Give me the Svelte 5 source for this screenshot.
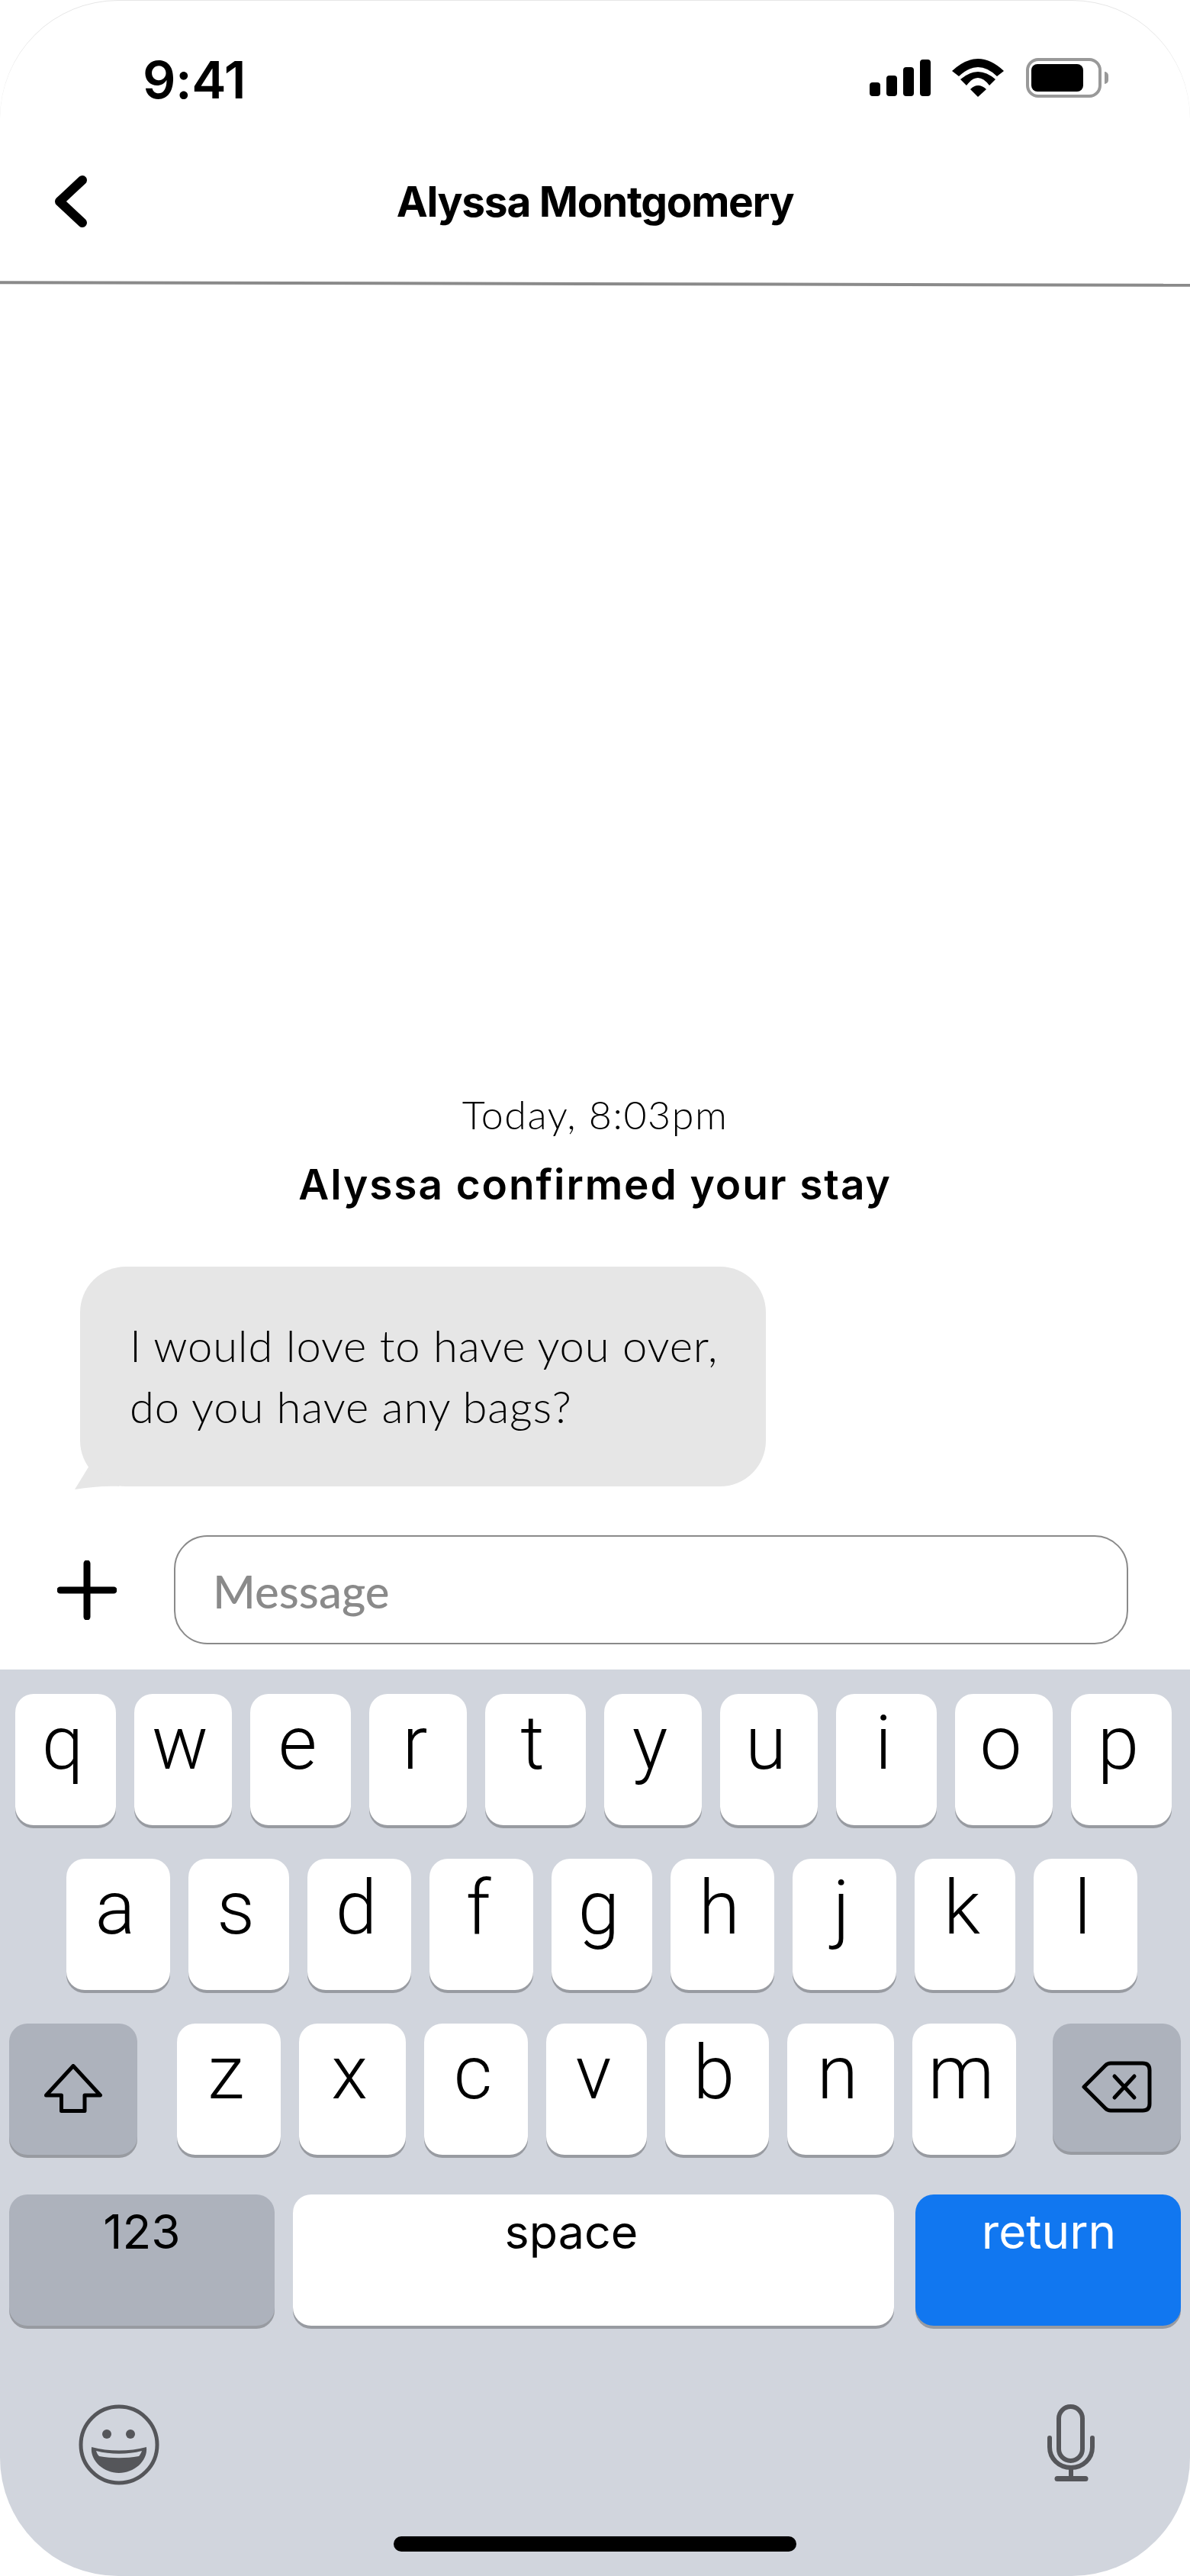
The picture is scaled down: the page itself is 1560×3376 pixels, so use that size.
<script>
  const rows = [
    [["q", 132], ["w", 128], ["e", 132], ["r", 128], ["t", 132], ["y", 128], ["u", 128], ["i", 132], ["o", 128], ["p", 132]],
    [["a", 136], ["s", 132], ["d", 136], ["f", 136], ["g", 132], ["h", 136], ["j", 136], ["k", 132], ["l", 136]]
  ];
  const lower = [["z", 136], ["x", 140], ["c", 136], ["v", 132], ["b", 136], ["n", 140], ["m", 136]];
</script>

<div class="phone">
  <header class="status">
    <span class="time">9:41</span>
    <div class="status-icons">
      <div class="signal">
        <i class="b1"></i><i class="b2"></i><i class="b3"></i><i class="b4"></i>
      </div>
      <svg class="wifi" width="68" height="50" viewBox="0 0 68 50">
        <path d="M0 16 Q34 -16 68 16 L59 23 Q34 -1 9 23 Z" />
        <path d="M11 27 Q34 7 57 27 L49 35 Q34 15 19 35 Z" />
        <path d="M24 40 Q34 30 45 40 L34 50 Z" />
      </svg>
      <div class="battery"><div class="charge"></div></div>
      <div class="nub"></div>
    </div>
  </header>

  <nav class="nav">
    <svg class="back" width="42" height="68" viewBox="0 0 42 68">
      <path d="M36 6 L6 34 M6 34 L36 62" />
    </svg>
    <h1>Alyssa Montgomery</h1>
    <span></span>
  </nav>
  <div class="divider"></div>

  <main class="chat">
    <p class="stamp">Today, 8:03pm</p>
    <p class="confirmed">Alyssa confirmed your stay</p>
    <div class="bubble">
      <svg class="tail" width="60" height="34" viewBox="0 0 60 34">
        <path d="M0 34 L19 3 L59 30 C40 29 20 31 0 34 Z" />
      </svg>
      I would love to have you over,<br />do you have any bags?
    </div>
  </main>

  <div class="composer">
    <svg class="plus" width="78" height="78" viewBox="0 0 78 78">
      <path d="M39 4 V74 M4 39 H74" />
    </svg>
    <div class="field"><span>Message</span></div>
  </div>

  <section class="keyboard">
    <div class="row first">
      {#each rows[0] as [ch, w]}
        <div class="key" style:width="{w}px">{ch}</div>
      {/each}
    </div>
    <div class="row second">
      {#each rows[1] as [ch, w]}
        <div class="key" style:width="{w}px">{ch}</div>
      {/each}
    </div>
    <div class="row third">
      <div class="key mod shift">
        <svg width="76" height="64" viewBox="0 0 76 64">
          <path d="M38 2.500 L73.500 41 H53 V61.500 H22.500 V41 H2.500 Z" />
        </svg>
      </div>
      <div class="letters">
        {#each lower as [ch, w]}
          <div class="key" style:width="{w}px">{ch}</div>
        {/each}
      </div>
      <div class="key mod del">
        <svg width="92" height="68" viewBox="0 0 92 68">
          <path d="M3 34 L31 6 Q34 3 38 3 H80 Q89 3 89 12 V56 Q89 65 80 65 H38 Q34 65 31 62 Z" />
          <path d="M43 20 L69 48 M69 20 L43 48" />
        </svg>
      </div>
    </div>
    <div class="row fourth">
      <div class="key wide mod">123</div>
      <div class="key wide space">space</div>
      <div class="key wide go">return</div>
    </div>
    <div class="tray">
      <svg class="emoji" width="106" height="106" viewBox="0 0 106 106">
        <circle class="ring" cx="53" cy="53" r="50" />
        <circle class="eye" cx="37" cy="39" r="6" />
        <circle class="eye" cx="68" cy="39" r="6" />
        <path class="mouth" d="M17 56 C40 62 66 62 89 56 C91 75 72 90 53 90 C34 90 15 75 17 56 Z" />
        <path class="teeth" d="M23 61 C42 66 64 66 83 61 C82 64 80 67 79 68 C62 71 44 71 27 68 C25 66 24 64 23 61 Z" />
      </svg>
      <svg class="mic" width="62" height="102" viewBox="0 0 62 102">
        <rect class="capsule" x="15" y="3" width="31" height="71" rx="15.500" />
        <path class="cup" d="M3 44 V56 C3 71 15 83 31 83 C47 83 59 71 59 56 V44" />
        <path class="cup" d="M31 83 V97" />
        <path class="base" d="M13 97.500 H50" />
      </svg>
    </div>
    <div class="home"></div>
  </section>
</div>

<style>
  :global(body) {
    margin: 0;
    background: #fff;
  }

  .phone {
    width: 1560px;
    height: 3376px;
    display: flex;
    flex-direction: column;
    overflow: hidden;
    border-radius: 155px;
    box-shadow: inset 0 1px 0 #e6e6e6;
    background: #fff;
    color: #000;
    font-family: "Inter", "Liberation Sans", sans-serif;
  }

  /* status bar */
  .status {
    height: 158px;
    flex: none;
    box-sizing: border-box;
    padding: 70px 107px 0 187px;
    display: flex;
    justify-content: space-between;
    align-items: flex-start;
  }

  .time {
    font-size: 68px;
    font-weight: 600;
    line-height: 68px;
    letter-spacing: -0.5px;
  }

  .status-icons {
    display: flex;
    align-items: flex-start;
    margin-top: 6px;
  }

  .signal {
    display: flex;
    align-items: flex-end;
    gap: 8px;
    height: 48px;
    margin-top: 2px;
    margin-right: 28px;
  }

  .signal i {
    display: block;
    width: 14px;
    border-radius: 4px;
    background: #000;
  }

  .signal .b1 { height: 18px; }
  .signal .b2 { height: 27px; }
  .signal .b3 { height: 38px; }
  .signal .b4 { height: 48px; }

  .wifi {
    margin-top: 1px;
    margin-right: 29px;
    fill: #000;
  }

  .battery {
    width: 99px;
    height: 52px;
    box-sizing: border-box;
    border: 4px solid #999;
    border-radius: 16px;
    padding: 4px 20px 4px 3px;
  }

  .charge {
    height: 36px;
    border-radius: 8px;
    background: #000;
  }

  .nub {
    width: 5px;
    height: 16px;
    margin: 18px 0 0 4px;
    border-radius: 0 8px 8px 0;
    background: #999;
  }

  /* nav */
  .nav {
    height: 212px;
    flex: none;
    box-sizing: border-box;
    padding-left: 72px;
    display: grid;
    grid-template-columns: 1fr auto 1fr;
    align-items: center;
  }

  .back {
    fill: none;
    stroke: #000;
    stroke-width: 12;
    stroke-linecap: round;
    stroke-linejoin: round;
  }

  h1 {
    margin: 0 0 0 -72px;
    font-size: 55px;
    font-weight: 700;
    line-height: 64px;
    letter-spacing: -1.300px;
  }

  .divider {
    height: 4px;
    flex: none;
    background: #8a8a8a;
    transform: rotate(0.136deg);
  }

  /* chat */
  .chat {
    flex: 1;
    min-height: 0;
    display: flex;
    flex-direction: column;
    align-items: center;
    justify-content: flex-end;
  }

  .stamp {
    margin: 0;
    font-family: "Lato", sans-serif;
    font-size: 52px;
    font-weight: 300;
    line-height: 60px;
    letter-spacing: 1.500px;
  }

  .confirmed {
    margin: 30px 0 76px;
    font-size: 55px;
    font-weight: 600;
    line-height: 64px;
    letter-spacing: 1.900px;
  }

  .bubble {
    position: relative;
    align-self: flex-start;
    margin-left: 105px;
    width: 899px;
    height: 288px;
    box-sizing: border-box;
    padding: 63px 0 0 65px;
    border-radius: 60px;
    background: #e6e6e6;
    font-family: "Lato", sans-serif;
    font-size: 58px;
    font-weight: 300;
    line-height: 80px;
    letter-spacing: 0.800px;
  }

  .tail {
    position: absolute;
    left: -7px;
    bottom: -4px;
    fill: #e6e6e6;
  }

  /* composer */
  .composer {
    flex: none;
    height: 240px;
    box-sizing: border-box;
    padding: 64px 81px 0 75px;
    display: flex;
    align-items: flex-start;
    gap: 75px;
  }

  .plus {
    margin-top: 33px;
    fill: none;
    stroke: #000;
    stroke-width: 9;
    stroke-linecap: round;
  }

  .field {
    flex: 1;
    height: 143px;
    box-sizing: border-box;
    border: 2px solid #8a8a8a;
    border-radius: 44px;
    padding: 3px 0 0 49px;
    display: flex;
    align-items: center;
    color: #8a8a8a;
    font-family: "Lato", sans-serif;
    font-size: 60px;
    font-weight: 500;
  }

  /* keyboard */
  .keyboard {
    flex: none;
    height: 1188px;
    box-sizing: border-box;
    padding-top: 32px;
    background: #d1d5dd;
    display: flex;
    flex-direction: column;
  }

  .row {
    display: flex;
    gap: 24px;
    height: 172px;
    margin-bottom: 44px;
  }

  .row.first { padding-left: 20px; }
  .row.second { padding-left: 87px; }

  .row.third {
    padding-left: 12px;
    margin-bottom: 52px;
    gap: 0;
  }

  .letters {
    display: flex;
    gap: 24px;
    margin: 0 48px 0 52px;
  }

  .row.fourth {
    padding-left: 12px;
    margin-bottom: 0;
  }

  .key {
    box-sizing: border-box;
    height: 172px;
    padding: 16px 8px 0 0;
    border-radius: 24px;
    background: #fff;
    box-shadow: 0 4px 0 #989ba1;
    color: #000;
    font-family: "Roboto", sans-serif;
    font-size: 98px;
    font-weight: 300;
    line-height: 98px;
    text-align: center;
  }

  .key.mod {
    background: #adb2bc;
  }

  .shift,
  .del {
    width: 168px;
    display: flex;
    justify-content: center;
    align-items: flex-start;
  }

  .key.shift {
    padding: 53px 0 0;
  }

  .key.del {
    height: 168px;
    padding: 49px 0 0 38px;
    justify-content: flex-start;
  }

  .shift svg,
  .del svg {
    fill: none;
    stroke: #000;
    stroke-width: 5;
    stroke-linejoin: round;
    stroke-linecap: round;
  }

  .key.wide {
    width: 348px;
    padding: 14px 0 0;
    font-family: "Inter", sans-serif;
    font-size: 62px;
    font-weight: 400;
    line-height: 70px;
  }

  .key.space {
    width: 788px;
    margin-right: 4px;
    padding-right: 58px;
    font-size: 61px;
  }

  .key.go {
    padding-left: 2px;
    background: #1177f0;
    color: #fff;
  }

  .tray {
    height: 102px;
    margin-top: 103px;
    padding: 0 125px 0 103px;
    display: flex;
    justify-content: space-between;
    align-items: flex-start;
  }

  .ring {
    fill: none;
    stroke: #55565a;
    stroke-width: 5;
  }

  .eye,
  .mouth {
    fill: #55565a;
  }

  .teeth {
    fill: #d1d5dd;
  }

  .capsule,
  .cup,
  .base {
    fill: none;
    stroke: #55565a;
    stroke-width: 6;
    stroke-linecap: round;
  }

  .base {
    stroke-width: 7;
  }

  .home {
    width: 528px;
    height: 20px;
    margin: 71px 0 0 516px;
    border-radius: 10px;
    background: #000;
  }
</style>
